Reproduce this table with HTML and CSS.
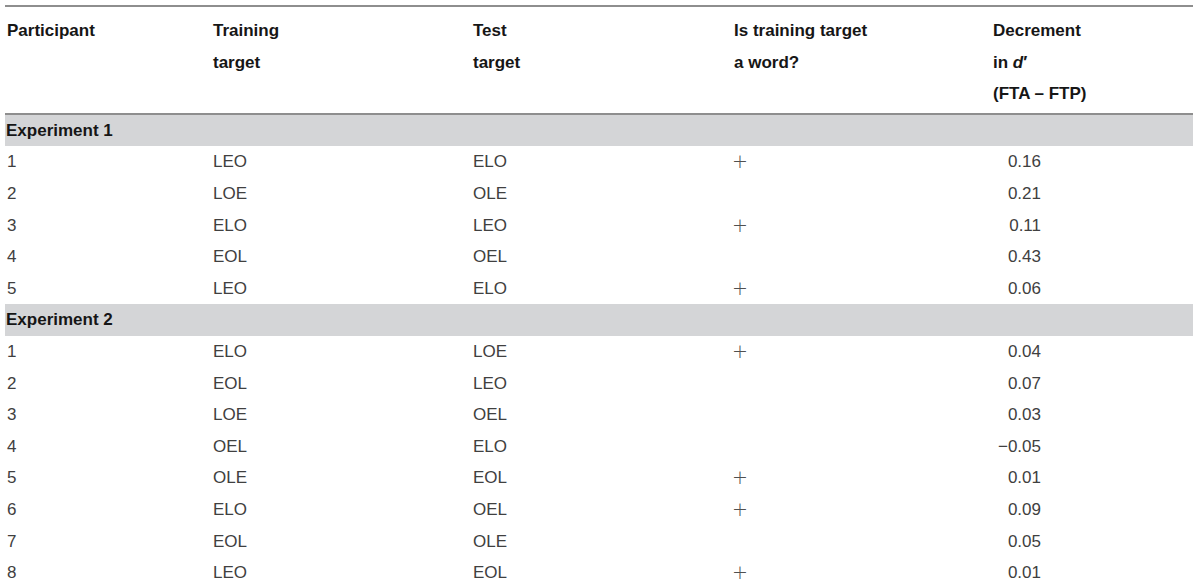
FILE: index.html
```html
<!DOCTYPE html>
<html>
<head>
<meta charset="utf-8">
<link rel="stylesheet" href="styles.css">
</head>
<body>
<table class="tbl">
  <colgroup>
    <col class="c1"><col class="c2"><col class="c3"><col class="c4"><col class="c5">
  </colgroup>
  <thead>
    <tr>
      <th>Participant</th>
      <th>Training<br>target</th>
      <th>Test<br>target</th>
      <th>Is training target<br>a word?</th>
      <th>Decrement<br>in <i>d</i>′<br>(FTA – FTP)</th>
    </tr>
  </thead>
  <tbody>
    <tr class="band"><td colspan="5">Experiment 1</td></tr>
    <tr><td>1</td><td>LEO</td><td>ELO</td><td class="plus">+</td><td class="num">0.16</td></tr>
    <tr><td>2</td><td>LOE</td><td>OLE</td><td></td><td class="num">0.21</td></tr>
    <tr><td>3</td><td>ELO</td><td>LEO</td><td class="plus">+</td><td class="num">0.11</td></tr>
    <tr><td>4</td><td>EOL</td><td>OEL</td><td></td><td class="num">0.43</td></tr>
    <tr><td>5</td><td>LEO</td><td>ELO</td><td class="plus">+</td><td class="num">0.06</td></tr>
    <tr class="band"><td colspan="5">Experiment 2</td></tr>
    <tr><td>1</td><td>ELO</td><td>LOE</td><td class="plus">+</td><td class="num">0.04</td></tr>
    <tr><td>2</td><td>EOL</td><td>LEO</td><td></td><td class="num">0.07</td></tr>
    <tr><td>3</td><td>LOE</td><td>OEL</td><td></td><td class="num">0.03</td></tr>
    <tr><td>4</td><td>OEL</td><td>ELO</td><td></td><td class="num">−0.05</td></tr>
    <tr><td>5</td><td>OLE</td><td>EOL</td><td class="plus">+</td><td class="num">0.01</td></tr>
    <tr><td>6</td><td>ELO</td><td>OEL</td><td class="plus">+</td><td class="num">0.09</td></tr>
    <tr><td>7</td><td>EOL</td><td>OLE</td><td></td><td class="num">0.05</td></tr>
    <tr><td>8</td><td>LEO</td><td>EOL</td><td class="plus">+</td><td class="num">0.01</td></tr>
  </tbody>
</table>
</body>
</html>
```

FILE: styles.css
```css
html, body {
  margin: 0;
  padding: 0;
  background: #ffffff;
}

body {
  font-family: "Liberation Sans", Arial, Helvetica, sans-serif;
  font-size: 17px;
  color: #404040;
}

.tbl {
  margin: 5px 0 0 5px;
  width: 1188px;
  table-layout: fixed;
  border-collapse: collapse;
  border-top: 2px solid #8e8e8e;
}

.c1 { width: 206px; }
.c2 { width: 260px; }
.c3 { width: 261px; }
.c4 { width: 259px; }
.c5 { width: 202px; }

.tbl th {
  text-align: left;
  vertical-align: top;
  font-weight: bold;
  color: #161616;
  line-height: 31.6px;
  padding: 8px 0 3px 2px;
  border-bottom: 2px solid #8e8e8e;
}

.tbl th i {
  font-style: italic;
}

.tbl td {
  padding: 0 0 0 2px;
  line-height: 31.6px;
  height: 31.6px;
  white-space: nowrap;
}

.tbl .band td {
  background: #d4d5d7;
  font-weight: bold;
  color: #161616;
  padding-left: 1px;
}

.tbl td.plus {
  font-family: "DejaVu Sans", sans-serif;
  font-size: 19px;
  font-weight: 200;
  color: #505050;
  padding-left: 0;
}

.tbl td.num {
  text-align: right;
  padding-right: 152px;
}
```
